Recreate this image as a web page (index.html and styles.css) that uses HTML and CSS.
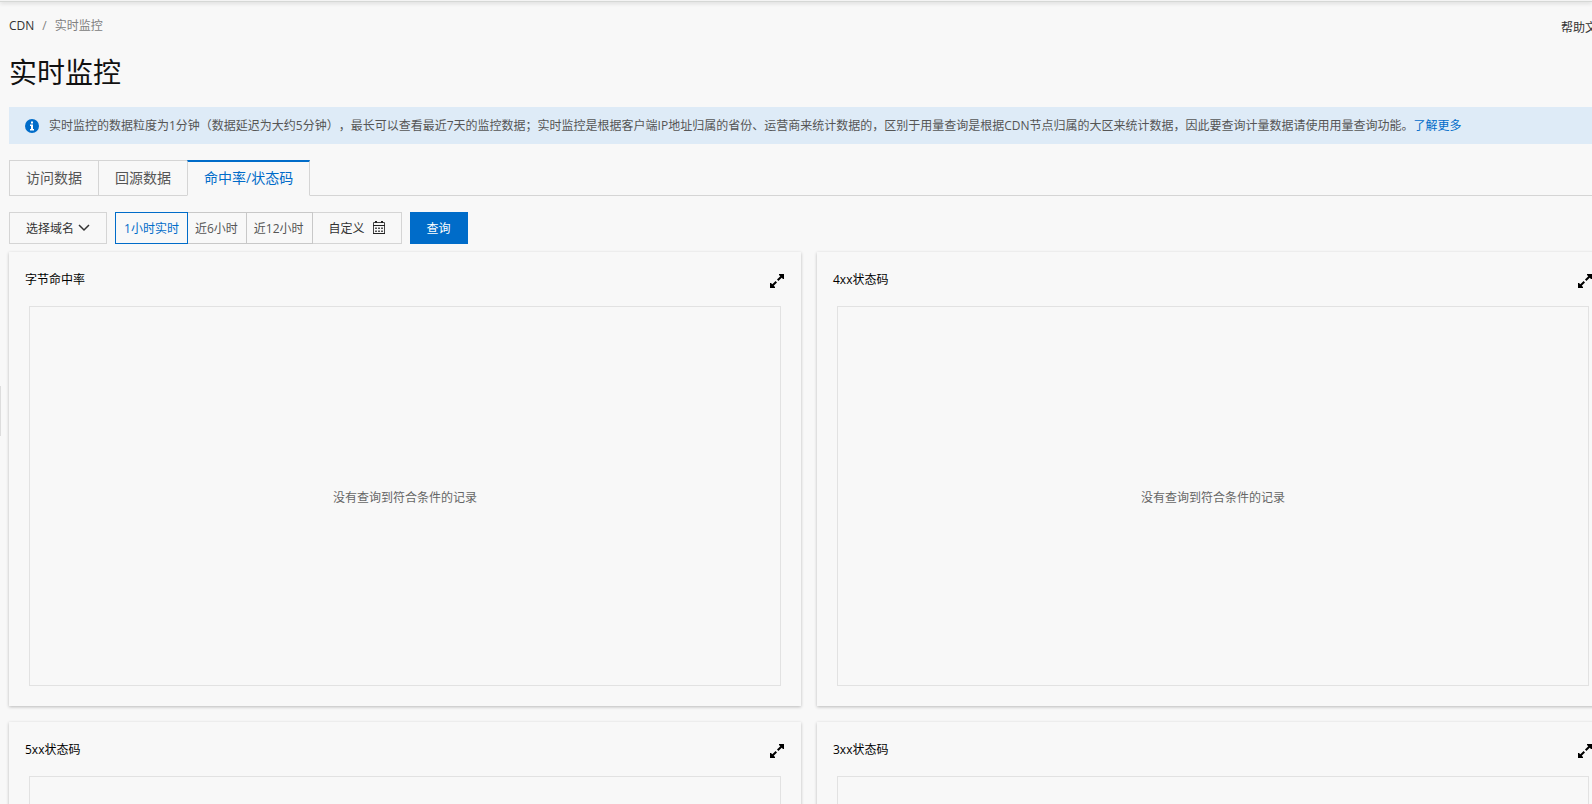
FILE: index.html
```html
<!DOCTYPE html>
<html lang="zh-CN">
<head>
<meta charset="utf-8">
<title>实时监控</title>
<link rel="stylesheet" href="styles.css">
</head>
<body>
<svg class="sprite" aria-hidden="true">
  <symbol id="expand" viewBox="0 0 14 14">
    <path d="M9 0h5v5h-1L9 1zM0 9v5h5v-1L1 9z"/>
    <path d="M12.500 1.500L7.700 6.300M6.300 7.700L1.500 12.500" fill="none" stroke="#000" stroke-width="2"/>
  </symbol>
</svg>
<div class="topbar"></div>
<div class="side-handle"></div>
<main class="page">
  <header class="head">
    <nav class="crumbs" aria-label="breadcrumb">
      <a class="crumb-root" href="#">CDN</a><span class="slash">/</span><span>实时监控</span>
    </nav>
    <a class="help" href="#">帮助文档</a>
  </header>
  <h1 class="title">实时监控</h1>

  <div class="notice">
    <svg class="info" viewBox="0 0 14 14" aria-hidden="true">
      <circle cx="7" cy="7" r="7" fill="#006cc9"/>
      <path fill="#fff" d="M6 2.500h2v2H6zM5 5.500h3v4.500h1v1.500H5V10h1V7H5z"/>
    </svg>
    <p class="notice-text">实时监控的数据粒度为1分钟（数据延迟为大约5分钟），最长可以查看最近7天的监控数据；实时监控是根据客户端IP地址归属的省份、运营商来统计数据的，区别于用量查询是根据CDN节点归属的大区来统计数据，因此要查询计量数据请使用用量查询功能。<a class="more" href="#">了解更多</a></p>
  </div>

  <div class="tabs" role="tablist">
    <button class="tab" role="tab">访问数据</button>
    <button class="tab" role="tab">回源数据</button>
    <button class="tab active" role="tab" aria-selected="true">命中率/状态码</button>
  </div>

  <div class="filters">
    <button class="btn domain">选择域名
      <svg class="chevron" viewBox="0 0 12 12" aria-hidden="true"><path d="M1 2l5 5 5-5" fill="none" stroke="#333" stroke-width="1.500"/></svg>
    </button>
    <div class="group">
      <button class="btn range selected">1小时实时</button>
      <button class="btn range">近6小时</button>
      <button class="btn range">近12小时</button>
      <button class="btn custom">自定义
        <svg class="calendar" viewBox="0 0 12 13" aria-hidden="true">
          <path d="M.5 1.500h11v11H.5z" fill="none" stroke="#444"/>
          <path d="M0 4h12v1H0zM0 12h12v1H0zM2 0h2v2H2zM8 0h2v2H8z" fill="#222"/>
          <path d="M2 6.500h2v1.500H2zM5 6.500h2v1.500H5zM8 6.500h2v1.500H8zM2 9.500h2v1.500H2zM5 9.500h2v1.500H5zM8 9.500h2v1.500H8z" fill="#555"/>
        </svg>
      </button>
    </div>
    <button class="btn primary">查询</button>
  </div>

  <div class="cards">
    <section class="card">
      <div class="card-head"><h2 class="card-title">字节命中率</h2><button class="expand" aria-label="放大"><svg class="expand-icon"><use href="#expand"/></svg></button></div>
      <div class="chart">没有查询到符合条件的记录</div>
    </section>
    <section class="card">
      <div class="card-head"><h2 class="card-title">4xx状态码</h2><button class="expand" aria-label="放大"><svg class="expand-icon"><use href="#expand"/></svg></button></div>
      <div class="chart">没有查询到符合条件的记录</div>
    </section>
    <section class="card">
      <div class="card-head"><h2 class="card-title">5xx状态码</h2><button class="expand" aria-label="放大"><svg class="expand-icon"><use href="#expand"/></svg></button></div>
      <div class="chart"></div>
    </section>
    <section class="card">
      <div class="card-head"><h2 class="card-title">3xx状态码</h2><button class="expand" aria-label="放大"><svg class="expand-icon"><use href="#expand"/></svg></button></div>
      <div class="chart"></div>
    </section>
  </div>
</main>
</body>
</html>
```

FILE: styles.css
```css
* { box-sizing: border-box; }
body {
  margin: 0;
  height: 100vh;
  overflow: hidden;
  background: #f8f8f8;
  color: #333;
  font: 12px/18px "Open Sans", "Noto Sans CJK SC", sans-serif;
  text-spacing-trim: space-all;
}
h1, h2, p { margin: 0; font-weight: 400; }
a { color: inherit; text-decoration: none; }
button {
  margin: 0;
  font: inherit;
  color: inherit;
  background: none;
  border: 0;
  white-space: nowrap;
}
svg { display: block; flex: none; }
.sprite { position: absolute; width: 0; height: 0; }

.topbar {
  height: 2px;
  background: #d6d8d6;
  border-top: 1px solid #f4f4f4;
  box-shadow: 0 1px 4px rgba(0, 0, 0, .2);
}
.side-handle {
  position: fixed;
  left: 0;
  top: 386px;
  width: 1px;
  height: 50px;
  background: #ddd;
}
.page { margin: 0 -17px 0 9px; padding-top: 14px; }

.head { display: flex; justify-content: space-between; height: 20px; line-height: 20px; }
.crumbs { color: #808080; }
.crumb-root { color: #333; }
.slash { margin: 0 8px; }
.help { padding-top: 2px; }
.title { padding-top: 16px; font-size: 28px; line-height: 40px; color: #111; }

.notice {
  display: flex;
  align-items: center;
  gap: 10px;
  height: 37px;
  margin-top: 15px;
  padding: 1px 16px 0;
  background: #deebf7;
  color: #555;
}
.info { width: 14px; height: 14px; }
.notice-text { white-space: nowrap; }
.more { color: #006cc9; }

.tabs { display: flex; margin-top: 16px; border-bottom: 1px solid #d5d5d5; }
.tab {
  height: 36px;
  margin-bottom: -1px;
  padding: 0 16px;
  border: 1px solid #d5d5d5;
  border-right: 0;
  font-size: 14px;
  color: #555;
}
.tab.active {
  padding-bottom: 2px;
  border-top: 2px solid #006cc9;
  border-right: 1px solid #d5d5d5;
  border-bottom-color: #f8f8f8;
  border-left: 1px solid #d5d5d5;
  background: #f8f8f8;
  color: #006cc9;
}

.filters { display: flex; gap: 8px; margin-top: 16px; }
.group { display: flex; }
.btn { display: flex; align-items: center; height: 32px; padding: 2px 16px 0; border: 1px solid #d5d5d5; }
.domain { gap: 4px; }
.chevron { width: 12px; height: 12px; }
.range { padding: 2px 8px 0 7px; border-color: #c8c8c8; border-left: 0; color: #555; }
.range.selected { padding-left: 8px; border: 1px solid #006cc9; color: #006cc9; }
.custom { gap: 8px; border-left: 0; }
.calendar { width: 12px; height: 13px; margin-bottom: 3px; }
.primary { border-color: #006cc9; background: #006cc9; color: #fff; }

.cards { display: grid; grid-template-columns: 1fr 1fr; gap: 16px; margin-top: 8px; }
.card {
  height: 454px;
  padding: 16px 20px 20px;
  box-shadow: 0 1px 3px rgba(0, 0, 0, .25);
}
.card-head { display: flex; justify-content: space-between; height: 38px; margin: 0 -3px 0 -4px; }
.card-title { font-size: 12px; line-height: 24px; color: #000; }
.expand { width: 14px; height: 26px; padding: 6px 0; }
.expand-icon { width: 14px; height: 14px; }
.chart {
  display: flex;
  align-items: center;
  justify-content: center;
  height: 380px;
  padding-top: 4px;
  border: 1px solid #e2e2e2;
  color: #666;
}
```
